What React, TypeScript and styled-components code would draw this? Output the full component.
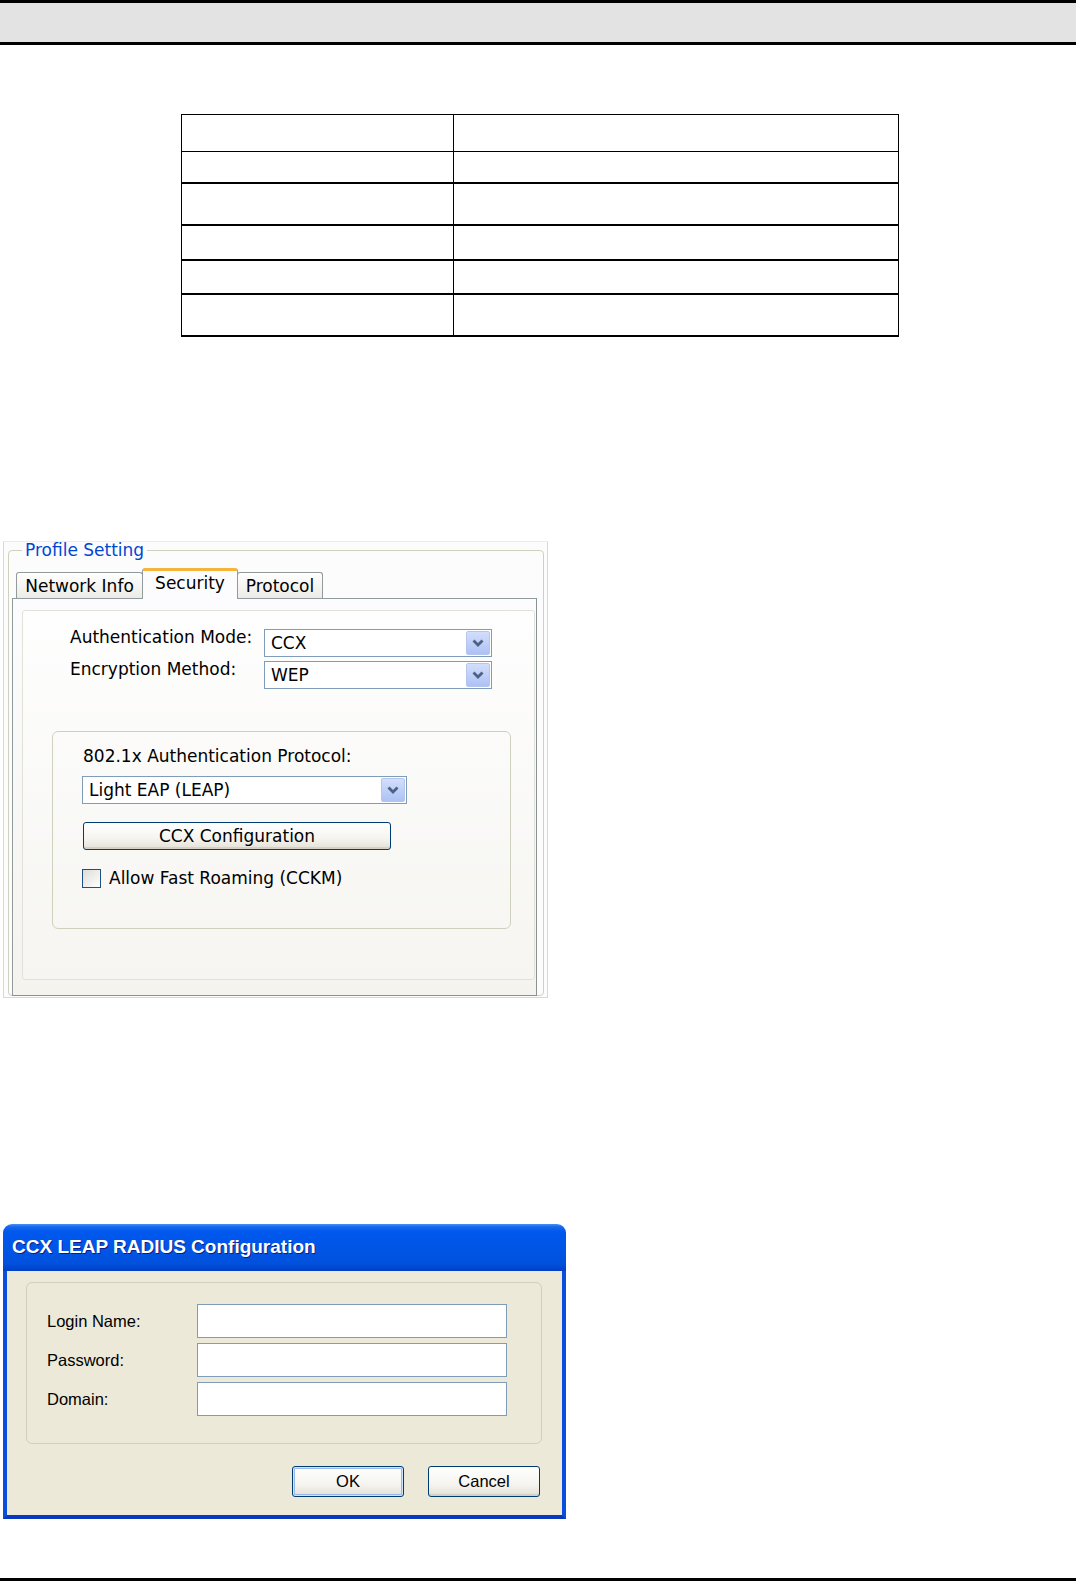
import React from "react"
import styled, { createGlobalStyle, css } from "styled-components"

const GlobalStyle = createGlobalStyle`
  html, body {
    margin: 0;
    padding: 0;
    background: #ffffff;
  }
  body {
    font-family: "DejaVu Sans", "Liberation Sans", sans-serif;
    color: #000;
  }
  *, *::before, *::after {
    box-sizing: border-box;
  }
`

const Page = styled.div`
  width: 1076px;
  min-height: 1581px;
  display: flex;
  flex-direction: column;
`

const HeaderBand = styled.div`
  height: 45px;
  background: #e3e3e3;
  border-top: 3px solid #000;
  border-bottom: 3px solid #000;
`

/* ---------- empty spec table ---------- */

const Table = styled.div`
  margin: 69px 0 0 181px;
  width: 718px;
  border: 1px solid #000;
  border-bottom: none;
`

const Row = styled.div<{ $h: number; $line: number }>`
  display: grid;
  grid-template-columns: 272px 1fr;
  height: ${p => p.$h + p.$line}px;
  border-bottom: ${p => p.$line}px solid #000;
`

const KeyCell = styled.div`
  border-right: 1px solid #000;
`

const ValueCell = styled.div``

const rows = [
  { h: 36, line: 1 },
  { h: 30, line: 2 },
  { h: 40, line: 2 },
  { h: 33, line: 2 },
  { h: 32, line: 2 },
  { h: 40, line: 2 },
]

/* ---------- profile setting screenshot ---------- */

const Frame = styled.div`
  margin: 204px 0 0 3px;
  width: 545px;
  height: 457px;
  border: 1px solid #d8d8d8;
  border-top-color: #ececec;
  background: #fcfcfc;
  padding: 0 4px;
  font-size: 17px;
`

const GroupFrame = styled.fieldset`
  margin: 0;
  min-width: 0;
  width: 536px;
  height: 454px;
  padding: 0 6px 0 3px;
  border: 1px solid #d0d0bf;
  border-radius: 4px;
`

const Legend = styled.legend`
  margin-left: 10px;
  padding: 0 3px;
  line-height: 16px;
  font-size: 17px;
  color: #0046d5;
`

const TabRow = styled.div`
  display: flex;
  align-items: flex-end;
  height: 30px;
  margin-top: 10px;
  padding-left: 4px;
  position: relative;
  z-index: 1;
`

const Tab = styled.div<{ $w: number; $active?: boolean }>`
  width: ${p => p.$w}px;
  height: 26px;
  display: flex;
  align-items: center;
  justify-content: center;
  border: 1px solid #919b9c;
  border-bottom: none;
  border-radius: 3px 3px 0 0;
  background: linear-gradient(#ffffff, #ecebe6);
  font-size: 17px;
  padding-top: 1px;
  ${p =>
    p.$active &&
    css`
      height: 31px;
      margin-bottom: -1px;
      margin-left: -1px;
      margin-right: -1px;
      border-top: 3px solid #f7b43a;
      background: #fcfcfe;
      padding-top: 0;
      padding-bottom: 5px;
      position: relative;
      z-index: 2;
    `}
`

const TabPanel = styled.div`
  height: 398px;
  border: 1px solid #919b9c;
  border-right-color: #8a9293;
  border-bottom-color: #8a9293;
  background: linear-gradient(#fcfcfe, #f4f3ee);
  padding: 11px 1px 15px 9px;
`

const InnerPanel = styled.div`
  height: 100%;
  border: 1px solid #e2e1d9;
  border-radius: 3px;
  background: linear-gradient(#fefefe, #f6f5f1);
  padding: 18px 0 0 29px;
`

const FieldRow = styled.div`
  display: flex;
  align-items: flex-start;
  margin-left: 18px;
  & + & {
    margin-top: 4px;
  }
`

const FieldLabel = styled.span`
  width: 194px;
  line-height: 20px;
  margin-top: -2px;
  white-space: nowrap;
`

const Combo = styled.div<{ $w: number }>`
  width: ${p => p.$w}px;
  height: 28px;
  border: 1px solid #7f9db9;
  background: #fff;
  display: flex;
  align-items: center;
  padding: 0 1px 0 6px;
`

const ComboText = styled.span`
  flex: 1;
  white-space: nowrap;
`

const ComboButton = styled.span`
  width: 24px;
  height: 24px;
  border: 1px solid #b4c6f0;
  border-radius: 2px;
  background: linear-gradient(#d2defc, #adc2f4);
  display: flex;
  align-items: center;
  justify-content: center;
`

const ProtocolGroup = styled.div`
  margin-top: 42px;
  width: 459px;
  height: 198px;
  border: 1px solid #d0d0bf;
  border-radius: 6px;
  padding: 14px 0 0 30px;
`

const GroupLabel = styled.div`
  line-height: 20px;
  white-space: nowrap;
`

const ProtocolCombo = styled(Combo)`
  margin: 10px 0 0 -1px;
`

const XpButton = styled.div<{ $w: number; $h: number; $default?: boolean }>`
  width: ${p => p.$w}px;
  height: ${p => p.$h}px;
  border: 1px solid #003c74;
  border-radius: 3px;
  background: linear-gradient(#ffffff 0%, #f5f4ef 60%, #e3e0d6 100%);
  display: flex;
  align-items: center;
  justify-content: center;
  white-space: nowrap;
  box-shadow: ${p =>
    p.$default
      ? "inset 0 0 0 1px #cee7ff, inset 0 0 0 2px #98b8ea"
      : "inset 0 -2px 0 #d6d0c5"};
`

const ConfigButton = styled(XpButton)`
  margin-top: 18px;
`

const CheckRow = styled.div`
  display: flex;
  align-items: center;
  gap: 8px;
  margin: 18px 0 0 -1px;
  line-height: 20px;
`

const CheckBox = styled.span`
  width: 19px;
  height: 19px;
  border: 1px solid #1c5180;
  background: linear-gradient(135deg, #dcdcd7, #ffffff);
`

const Chevron = () => (
  <svg width="12" height="8" viewBox="0 0 12 8">
    <path d="M1.5 1.5 L6 6 L10.5 1.5" fill="none" stroke="#4d6185" strokeWidth="2.8" />
  </svg>
)

/* ---------- CCX LEAP dialog ---------- */

const Dialog = styled.div`
  margin: 226px 0 0 3px;
  width: 563px;
  font-family: "Liberation Sans", Arial, sans-serif;
  font-size: 16.5px;
`

const TitleBar = styled.div`
  height: 47px;
  border-radius: 9px 9px 0 0;
  background: linear-gradient(
    #4a90f4 0%,
    #1668ea 6%,
    #0058ee 16%,
    #0055e5 55%,
    #0051dc 85%,
    #0040c4 100%
  );
  display: flex;
  align-items: center;
  padding: 0 0 2px 9px;
`

const Title = styled.span`
  color: #fff;
  font-weight: bold;
  font-size: 19px;
  text-shadow: 1px 1px 0 #0a1e8a;
`

const DialogBody = styled.div`
  height: 248px;
  background: #ece9d8;
  border: 4px solid #0a4fdc;
  border-top: none;
  border-bottom-color: #0838c0;
  padding: 11px 20px 0 19px;
`

const LoginGroup = styled.div`
  height: 162px;
  border: 1px solid #d0d0bf;
  border-radius: 6px;
  padding: 21px 0 0 20px;
  display: grid;
  grid-template-columns: 150px 310px;
  grid-auto-rows: 34px;
  row-gap: 5px;
  align-items: center;
`

const LoginLabel = styled.span`
  white-space: nowrap;
`

const TextBox = styled.div`
  height: 34px;
  border: 1px solid #7f9db9;
  background: #fff;
`

const ButtonRow = styled.div`
  display: flex;
  justify-content: flex-end;
  gap: 24px;
  margin: 22px 2px 0 0;
`

const Footer = styled.div`
  margin-top: auto;
  height: 3px;
  background: #000;
`

const loginFields = ["Login Name:", "Password:", "Domain:"]

export default function App() {
  return (
    <Page>
      <GlobalStyle />
      <HeaderBand />

      <Table>
        {rows.map((r, i) => (
          <Row key={i} $h={r.h} $line={r.line}>
            <KeyCell />
            <ValueCell />
          </Row>
        ))}
      </Table>

      <Frame>
        <GroupFrame>
          <Legend>Profile Setting</Legend>
          <TabRow>
            <Tab $w={127}>Network Info</Tab>
            <Tab $w={96} $active>
              Security
            </Tab>
            <Tab $w={86}>Protocol</Tab>
          </TabRow>
          <TabPanel>
            <InnerPanel>
              <FieldRow>
                <FieldLabel>Authentication Mode:</FieldLabel>
                <Combo $w={228}>
                  <ComboText>CCX</ComboText>
                  <ComboButton>
                    <Chevron />
                  </ComboButton>
                </Combo>
              </FieldRow>
              <FieldRow>
                <FieldLabel>Encryption Method:</FieldLabel>
                <Combo $w={228}>
                  <ComboText>WEP</ComboText>
                  <ComboButton>
                    <Chevron />
                  </ComboButton>
                </Combo>
              </FieldRow>

              <ProtocolGroup>
                <GroupLabel>802.1x Authentication Protocol:</GroupLabel>
                <ProtocolCombo $w={325}>
                  <ComboText>Light EAP (LEAP)</ComboText>
                  <ComboButton>
                    <Chevron />
                  </ComboButton>
                </ProtocolCombo>
                <ConfigButton $w={308} $h={28}>
                  CCX Configuration
                </ConfigButton>
                <CheckRow>
                  <CheckBox />
                  <span>Allow Fast Roaming (CCKM)</span>
                </CheckRow>
              </ProtocolGroup>
            </InnerPanel>
          </TabPanel>
        </GroupFrame>
      </Frame>

      <Dialog>
        <TitleBar>
          <Title>CCX LEAP RADIUS Configuration</Title>
        </TitleBar>
        <DialogBody>
          <LoginGroup>
            {loginFields.map(label => (
              <React.Fragment key={label}>
                <LoginLabel>{label}</LoginLabel>
                <TextBox />
              </React.Fragment>
            ))}
          </LoginGroup>
          <ButtonRow>
            <XpButton $w={112} $h={31} $default>
              OK
            </XpButton>
            <XpButton $w={112} $h={31}>
              Cancel
            </XpButton>
          </ButtonRow>
        </DialogBody>
      </Dialog>

      <Footer />
    </Page>
  )
}
